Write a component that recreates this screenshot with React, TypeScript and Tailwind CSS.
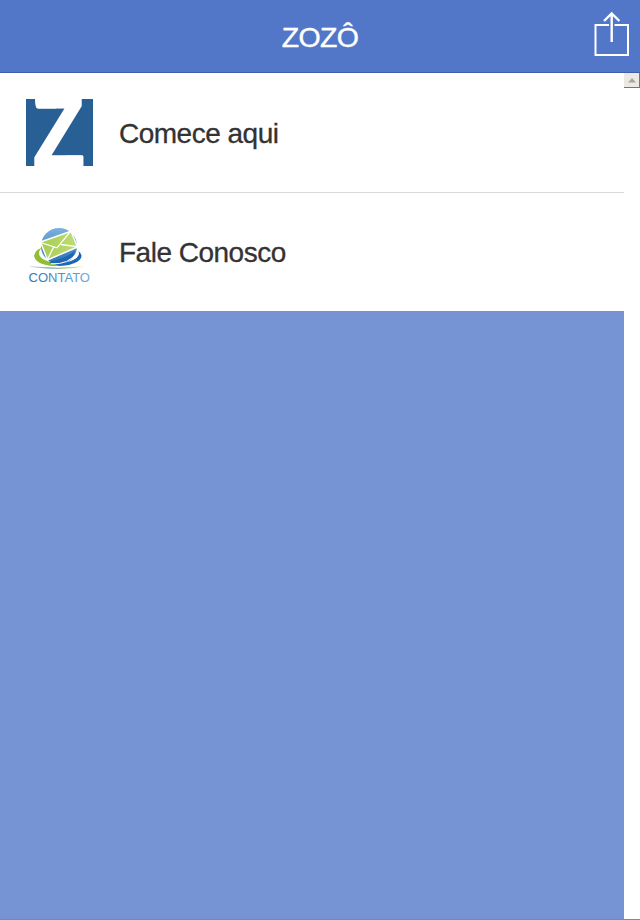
import type { ReactNode } from 'react';

const FONT = 'font-["Liberation_Sans",Arial,sans-serif]';

/** Square blue brand mark, the letter runs off the top and bottom edges */
function BrandLogo() {
  return (
    <svg width="67" height="67" viewBox="0 0 67 67" className="block overflow-visible">
      <rect width="67" height="67" fill="#285f94" />
      <text
        transform="translate(6.9 70.3) scale(0.79 1)"
        fontFamily="Liberation Sans, Arial, sans-serif"
        fontWeight="700"
        fontSize="107"
        fill="#fff"
        stroke="#fff"
        strokeWidth="3"
        strokeLinejoin="round"
      >
        Z
      </text>
      {/* serif spurs on the cropped arms */}
      <path d="M9 0H30V9.500H11Q9 8 9 0Z" fill="#fff" />
      <path d="M40 56.500H54Q56.500 57 55.500 67H40Z" fill="#fff" />
    </svg>
  );
}

function ContactLogo() {
  return (
    <svg width="67" height="67" viewBox="0 0 67 67" className="block">
      <defs>
        <linearGradient id="sky" x1="0" y1="0" x2="0" y2="1">
          <stop offset="0" stopColor="#7db1de" />
          <stop offset="1" stopColor="#2b70b8" />
        </linearGradient>
        <linearGradient id="leaf" x1="0" y1="0" x2="1" y2="0">
          <stop offset="0" stopColor="#a6cd52" />
          <stop offset="1" stopColor="#bfdc74" />
        </linearGradient>
        <linearGradient id="line" x1="0" y1="0" x2="1" y2="0">
          <stop offset="0" stopColor="#4c93cf" stopOpacity="0.2" />
          <stop offset="0.35" stopColor="#4a8fc4" />
          <stop offset="0.7" stopColor="#9bc552" />
          <stop offset="1" stopColor="#8fbd38" stopOpacity="0" />
        </linearGradient>
        <linearGradient id="word" x1="0" y1="0" x2="1" y2="0">
          <stop offset="0" stopColor="#2e75b8" />
          <stop offset="1" stopColor="#74a9d8" />
        </linearGradient>
      </defs>
      {/* orbit ring, green on the left and blue on the right */}
      <ellipse cx="32" cy="37" rx="23.500" ry="10" fill="#1d66b2" />
      <path d="M8.500 37C8.500 32 13 29 19 28L23 42L33 47C18 47.500 8.500 43 8.500 37Z" fill="#91c02e" />
      <ellipse cx="33" cy="34" rx="20" ry="10" fill="#fff" />
      <circle cx="33" cy="27" r="18" fill="url(#sky)" />
      <path d="M14.500 23L45 12.300L51.500 28L21.500 41Z" fill="url(#leaf)" stroke="#fff" strokeWidth="1.500" />
      <path d="M14.500 23.500L31 28.800L44.500 12.500M21.500 40.500L27.700 28M35 25.500L51 27.700" fill="none" stroke="#fff" strokeWidth="1.300" />
      <path d="M23 43Q38 40 49 32Q46 43 33 45Q26 45 23 43Z" fill="#1d66b2" />
      <path d="M25 44.800Q43 46 51.500 33" fill="none" stroke="#fff" strokeWidth="1" />
      <path d="M4 47.500Q32 51 58 47.500" fill="none" stroke="url(#line)" strokeWidth="1.200" />
      <text
        x="2.500"
        y="63"
        textLength="61.500"
        lengthAdjust="spacingAndGlyphs"
        fontFamily="Liberation Sans, Arial, sans-serif"
        fontSize="13"
        fill="url(#word)"
      >
        CONTATO
      </text>
    </svg>
  );
}

function ShareIcon() {
  return (
    <svg width="36" height="46" viewBox="0 0 36 46" fill="none" stroke="#fff" strokeWidth="2">
      <path d="M15 14H1.500V44H34V14H20.500" />
      <path d="M17.700 31V3M10 10L17.700 2.500L25.400 10" strokeWidth="2.400" />
    </svg>
  );
}

function MenuRow({ icon, label, className }: { icon: ReactNode; label: string; className: string }) {
  return (
    <li className={`flex items-center bg-white pl-[26px] ${className}`}>
      {icon}
      <span className="ml-[26px] pt-0.5 text-[28px] leading-8 tracking-[-0.5px] text-[#333] [-webkit-text-stroke:0.3px_#333]">
        {label}
      </span>
    </li>
  );
}

export default function App() {
  return (
    <div className={`flex h-screen flex-col overflow-hidden border-b border-[#888] bg-white ${FONT}`}>
      <header className="grid h-[73px] shrink-0 grid-cols-[1fr_auto_1fr] items-center border-b border-[#3b5fae] bg-[#5277c9]">
        <h1 className="col-start-2 pt-0.5 text-[28.5px] leading-8 tracking-[-0.7px] text-white [-webkit-text-stroke:0.4px_#fff]">
          ZOZÔ
        </h1>
        <button className="mr-[10px] -mt-1 justify-self-end" aria-label="Share">
          <ShareIcon />
        </button>
      </header>

      <div className="flex min-h-0 flex-1">
        <main className="flex-1 bg-[#7694d4]">
          <ul>
            <MenuRow icon={<BrandLogo />} label="Comece aqui" className="h-[120px] border-b border-[#d9d9d9]" />
            <MenuRow icon={<ContactLogo />} label="Fale Conosco" className="h-[118px]" />
          </ul>
        </main>
        {/* Classic scrollbar track with its up button */}
        <div className="w-4 bg-white">
          <div className="flex h-[15px] items-center justify-center border-r border-b border-[#777] bg-[#ece9e4]">
            <svg width="8" height="5" viewBox="0 0 8 5">
              <path d="M0 4.500L4 0L8 4.500Z" fill="#aaa69f" />
            </svg>
          </div>
        </div>
      </div>
    </div>
  );
}
